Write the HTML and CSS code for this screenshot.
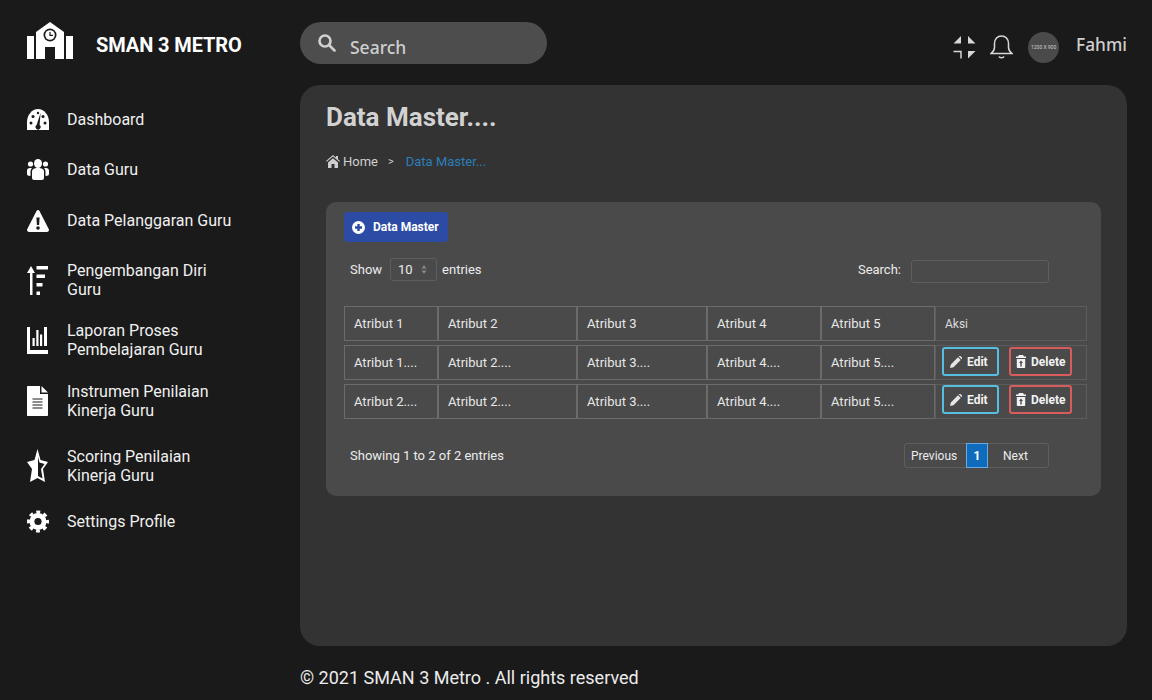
FILE: index.html
```html
<!DOCTYPE html>
<html>
<head>
  <title>SMAN 3 Metro - Data Master</title>
  <link rel="stylesheet" href="styles.css">
</head>
<body>
  <div class="page">
    <aside class="sidebar">
      <div class="brand">
        <svg class="brand-logo" viewBox="0 0 46 37">
          <path fill="#fff" d="M0 14h7v23H0zM39 14h7v23h-7zM9 10 L23 0 L37 10 V37 H28 V25 H18 V37 H9z"/>
          <circle cx="23" cy="13" r="6.500" fill="#1a1a1a"/>
          <circle cx="23" cy="13" r="4.800" fill="#fff"/>
          <path d="M23 10v3.300h3" fill="none" stroke="#1a1a1a" stroke-width="1.200"/>
        </svg>
        <span class="brand-name">SMAN 3 METRO</span>
      </div>
      <nav class="nav">
        <a class="nav-item">
          <span class="nav-icon">
            <svg width="22" height="21" viewBox="0 0 22 21">
              <path fill="#fff" d="M0 21V13C0 6 5 0 11 0s11 6 11 13v8z"/>
              <g fill="#1a1a1a"><circle cx="4" cy="14" r="1.500"/><circle cx="6" cy="7.500" r="1.500"/><circle cx="16" cy="7.500" r="1.500"/><circle cx="18" cy="14" r="1.500"/><circle cx="11" cy="4" r="1.200"/><path d="M13.600 4 L12.600 16 A2.500 2.500 0 1 1 9.600 16z"/></g>
            </svg>
          </span>
          <span>Dashboard</span>
        </a>
        <a class="nav-item nav-item-loose">
          <span class="nav-icon">
            <svg width="22" height="21" viewBox="0 0 22 21" fill="#fff">
              <ellipse cx="11" cy="4.500" rx="4" ry="4.500"/><circle cx="3.500" cy="5" r="2.600"/><circle cx="18.500" cy="5" r="2.600"/>
              <path d="M5 13c0-3 2-4 6-4s6 1 6 4v6c0 1-1 2-2 2H7c-1 0-2-1-2-2z"/>
              <path d="M0 15v-3c0-2 1-3 3-3h2c-1 1-1.500 2-1.500 4v4C1 17 0 16 0 15zM22 15v-3c0-2-1-3-3-3h-2c1 1 1.500 2 1.500 4v4c2.500 0 3.500-1 3.500-2z"/>
            </svg>
          </span>
          <span>Data Guru</span>
        </a>
        <a class="nav-item">
          <span class="nav-icon">
            <svg width="22" height="22" viewBox="0 0 22 22">
              <path fill="#fff" d="M9.500 1c.8-1.300 2.200-1.300 3 0l9.200 18c.7 1.400-.1 3-1.700 3H2c-1.600 0-2.400-1.600-1.700-3z"/>
              <path fill="#1a1a1a" d="M9.400 7.500h3.200l-.5 7.500H9.900z"/><circle cx="11" cy="18" r="1.800" fill="#1a1a1a"/>
            </svg>
          </span>
          <span>Data Pelanggaran Guru</span>
        </a>
        <a class="nav-item nav-item-tight">
          <span class="nav-icon">
            <svg width="21" height="29" viewBox="0 0 21 29" fill="#fff">
              <path d="M3 29V7H0L4 0l4 7H5.500v22z"/><path d="M9.500 0H21v3.500H9.500zM9.500 8.500H18V12H9.500zM9.500 17H15.500v3.500H9.500zM9.500 25.500H13V29H9.500z"/>
            </svg>
          </span>
          <span>Pengembangan Diri<br>Guru</span>
        </a>
        <a class="nav-item nav-item-snug">
          <span class="nav-icon">
            <svg width="21" height="27" viewBox="0 0 21 27" fill="#fff">
              <path d="M0 0h3v23h18v4H0z"/><path d="M5.500 11h2.200v8H5.500zM9.300 3h2.200v16H9.300zM13 7.500h2.200V19H13zM17 0h3v19h-3z"/>
            </svg>
          </span>
          <span>Laporan Proses<br>Pembelajaran Guru</span>
        </a>
        <a class="nav-item nav-item-wide">
          <span class="nav-icon">
            <svg width="21" height="30" viewBox="0 0 21 30">
              <path fill="#fff" d="M0 1c0-.6.400-1 1-1h12v8h8v21c0 .6-.4 1-1 1H1c-.6 0-1-.4-1-1zM14.500 0l6.500 6.500h-6.500z"/>
              <path stroke="#1a1a1a" stroke-width="1.200" d="M5.500 13h10M5.500 16h10M5.500 19h10M5.500 22h10"/>
            </svg>
          </span>
          <span>Instrumen Penilaian<br>Kinerja Guru</span>
        </a>
        <a class="nav-item nav-item-wide">
          <span class="nav-icon">
            <svg width="21" height="34" viewBox="0 0 21 34">
              <path fill="#fff" d="M10.500 0l3 11 7.500 2-5 7 2 13-7.500-4-7.500 4 2-13-5-7 7.500-2z"/>
              <path fill="#1a1a1a" d="M11 8l1.500 5.500 5 1.500-3.500 5 1.500 9.500-4.500-2.500z"/>
            </svg>
          </span>
          <span>Scoring Penilaian<br>Kinerja Guru</span>
        </a>
        <a class="nav-item">
          <span class="nav-icon">
            <svg width="22" height="23" viewBox="0 0 22 23">
              <circle cx="11" cy="11.500" r="8.500" fill="#fff"/>
              <circle cx="11" cy="11.500" r="9.500" fill="none" stroke="#fff" stroke-width="3" stroke-dasharray="3.900 3.560" stroke-dashoffset="2"/>
              <circle cx="11" cy="11.500" r="3.600" fill="#1a1a1a"/>
            </svg>
          </span>
          <span>Settings Profile</span>
        </a>
      </nav>
    </aside>

    <div class="main">
      <header class="topbar">
        <div class="search-pill">
          <svg width="18" height="18" viewBox="0 0 18 18" fill="none" stroke="#d0d0d0" stroke-width="2.600">
            <circle cx="7" cy="7" r="5.500"/><path d="M11 11l5.500 5.500" stroke-linecap="round"/>
          </svg>
          <span class="search-text">Search</span>
        </div>
        <div class="topbar-right">
          <svg width="23" height="23" viewBox="0 0 23 23" fill="#d8d8d8">
            <path d="M8 0v7.500H.5zM15 0l7.500 7.500H15zM15 22.500V15h7.500z"/>
            <path d="M.5 15.500H8v7" fill="none" stroke="#d8d8d8" stroke-width="1.500"/>
          </svg>
          <svg class="bell" width="23" height="24" viewBox="0 0 23 24" fill="none" stroke="#d8d8d8" stroke-width="1.500">
            <path d="M1 18.500c2-1.500 3.500-3 3.500-6V8.500C4.500 4 7.500 1 11.500 1s7 3 7 7.500v4c0 3 1.500 4.500 3.500 6z"/>
            <path d="M9 21.500c.5 1.500 4.500 1.500 5 0"/>
          </svg>
          <div class="avatar">1200 X 900</div>
          <span class="user-name">Fahmi</span>
        </div>
      </header>

      <section class="content-card">
        <h1 class="page-title">Data Master....</h1>
        <div class="breadcrumb">
          <svg width="14" height="13" viewBox="0 0 14 13" fill="#cfcfcf">
            <path d="M7 0l3 2.600V1h2v3.300L14 6l-.7.800L7 1.500.7 6.800 0 6zM2 7.500l5-4.200 5 4.200V13H8.500V9h-3v4H2z"/>
          </svg>
          <span class="crumb-home">Home</span>
          <span class="crumb-sep">&gt;</span>
          <span class="crumb-active">Data Master...</span>
        </div>

        <div class="panel">
          <button class="btn-add" type="button">
            <svg width="13" height="13" viewBox="0 0 13 13">
              <circle cx="6.500" cy="6.500" r="6.500" fill="#fff"/>
              <path d="M6.500 3v7M3 6.500h7" stroke="#2c4ba5" stroke-width="2.400"/>
            </svg>
            Data Master
          </button>

          <div class="table-tools">
            <div class="tool-left">
              Show
              <div class="select-box">10
                <svg width="6" height="9" viewBox="0 0 6 9" fill="#858585"><path d="M3 0l2.500 3.500h-5zM3 9L.5 5.500h5z"/></svg>
              </div>
              entries
            </div>
            <div class="tool-right">
              Search:
              <div class="search-box"></div>
            </div>
          </div>

          <table class="data-table">
            <colgroup>
              <col class="col-1"><col class="col-2"><col class="col-3"><col class="col-4"><col class="col-5"><col class="col-6">
            </colgroup>
            <tr class="head-row">
              <td>Atribut 1</td><td>Atribut 2</td><td>Atribut 3</td><td>Atribut 4</td><td>Atribut 5</td>
              <td class="action-head">Aksi</td>
            </tr>
            <tr>
              <td>Atribut 1....</td><td>Atribut 2....</td><td>Atribut 3....</td><td>Atribut 4....</td><td>Atribut 5....</td>
              <td class="action-cell">
                <div class="actions">
                  <button class="btn-outline btn-edit" type="button">
                    <svg width="12" height="12" viewBox="0 0 12 12" fill="#e6e6e6"><path d="M0 12l.8-3.500L8 1.300 10.700 4 3.500 11.200zM8.800.5l.5-.5c.4-.3.800-.3 1.100 0l1.600 1.600c.3.300.3.700 0 1l-.5.600z"/></svg>
                    Edit
                  </button>
                  <button class="btn-outline btn-delete" type="button">
                    <svg width="10" height="13" viewBox="0 0 10 13" fill="#f2f2f2"><path d="M3 0h4l1 1.500h2V3H0V1.500h2zM.8 4h8.400v8c0 .6-.4 1-1 1H1.800c-.6 0-1-.4-1-1zM5 5.500L3 8h1.300v3.500h1.400V8H7z"/></svg>
                    Delete
                  </button>
                </div>
              </td>
            </tr>
            <tr>
              <td>Atribut 2....</td><td>Atribut 2....</td><td>Atribut 3....</td><td>Atribut 4....</td><td>Atribut 5....</td>
              <td class="action-cell action-cell-last">
                <div class="actions">
                  <button class="btn-outline btn-edit" type="button">
                    <svg width="12" height="12" viewBox="0 0 12 12" fill="#e6e6e6"><path d="M0 12l.8-3.500L8 1.300 10.700 4 3.500 11.200zM8.800.5l.5-.5c.4-.3.800-.3 1.100 0l1.600 1.600c.3.300.3.700 0 1l-.5.600z"/></svg>
                    Edit
                  </button>
                  <button class="btn-outline btn-delete" type="button">
                    <svg width="10" height="13" viewBox="0 0 10 13" fill="#f2f2f2"><path d="M3 0h4l1 1.500h2V3H0V1.500h2zM.8 4h8.400v8c0 .6-.4 1-1 1H1.800c-.6 0-1-.4-1-1zM5 5.500L3 8h1.300v3.500h1.400V8H7z"/></svg>
                    Delete
                  </button>
                </div>
              </td>
            </tr>
          </table>

          <div class="table-footer">
            <span>Showing 1 to 2 of 2 entries</span>
            <div class="pagination">
              <span class="page-prev">Previous</span>
              <span class="page-num">1</span>
              <span class="page-next">Next</span>
            </div>
          </div>
        </div>
      </section>

      <footer class="footer">© 2021 SMAN 3 Metro . All rights reserved</footer>
    </div>
  </div>
</body>
</html>
```

FILE: styles.css
```css
body {
  margin: 0;
  background-color: #1a1a1a;
  font-family: Roboto, "Liberation Sans", sans-serif;
  color: #f0f0f0;
}

.page {
  display: flex;
  height: 700px;
  overflow: hidden;
}

.sidebar {
  width: 300px;
  flex-shrink: 0;
  padding: 22px 0 0 27px;
  box-sizing: border-box;
}

.brand {
  display: flex;
  align-items: center;
  gap: 23px;
  height: 37px;
  margin-bottom: 51px;
}

.brand-logo {
  width: 46px;
  height: 37px;
}

.brand-name {
  font-size: 20px;
  font-weight: 700;
  color: #fff;
  margin-top: 8px;
  letter-spacing: -0.1px;
}

.nav {
  display: flex;
  flex-direction: column;
}

.nav-item {
  display: flex;
  align-items: center;
  font-size: 16px;
  line-height: 19px;
  margin-bottom: 31px;
  color: #f0f0f0;
}

.nav-item-loose {
  margin-bottom: 32px;
}

.nav-item-tight {
  margin-bottom: 22px;
}

.nav-item-snug {
  margin-bottom: 23px;
}

.nav-item-wide {
  margin-bottom: 27px;
}

.nav-icon {
  display: flex;
  align-items: center;
  width: 40px;
  height: 19px;
  flex-shrink: 0;
}

.main {
  flex: 1;
  padding-right: 25px;
  display: flex;
  flex-direction: column;
}

.topbar {
  display: flex;
  justify-content: space-between;
  align-items: flex-start;
  height: 85px;
  padding-top: 22px;
  box-sizing: border-box;
}

.search-pill {
  display: flex;
  align-items: center;
  gap: 14px;
  width: 247px;
  height: 42px;
  padding-left: 18px;
  box-sizing: border-box;
  border-radius: 21px;
  background-color: #4d4d4d;
}

.search-text {
  font-family: "Noto Sans", sans-serif;
  font-size: 17.5px;
  font-weight: 500;
  color: #cfcfcf;
  margin-top: 7px;
}

.topbar-right {
  display: flex;
  align-items: center;
  height: 42px;
  margin-top: 4px;
}

.bell {
  margin-left: 14px;
}

.avatar {
  width: 31px;
  height: 31px;
  margin-left: 15px;
  border-radius: 50%;
  background-color: #4a4a4a;
  color: #cfcfcf;
  font-size: 5px;
  line-height: 31px;
  text-align: center;
  white-space: nowrap;
}

.user-name {
  margin: -5px 0 0 17px;
  font-family: "Noto Sans", sans-serif;
  font-size: 17.3px;
  font-weight: 500;
  color: #cfcfcf;
}

.content-card {
  height: 561px;
  box-sizing: border-box;
  padding: 16px 26px 0;
  border-radius: 20px;
  background-color: #333333;
}

.page-title {
  margin: 0;
  font-size: 26px;
  line-height: 32px;
  font-weight: 700;
  color: #d2d2d2;
}

.breadcrumb {
  display: flex;
  align-items: center;
  height: 16px;
  margin-top: 20px;
  font-size: 13px;
}

.crumb-home {
  margin-left: 3px;
  color: #cfcfcf;
}

.crumb-sep {
  margin: 0 10px;
  font-size: 11px;
  color: #cfcfcf;
}

.crumb-active {
  margin-left: 2px;
  color: #2b7fba;
}

.panel {
  margin-top: 33px;
  height: 294px;
  box-sizing: border-box;
  padding: 10px 14px 0 18px;
  border-radius: 10px;
  background-color: #4a4a4a;
  font-size: 13px;
}

.btn-add {
  display: flex;
  align-items: center;
  gap: 8px;
  width: 104px;
  height: 30px;
  padding: 0 0 0 8px;
  border: none;
  border-radius: 4px;
  background-color: #2c4ba5;
  color: #fff;
  font-family: Roboto, sans-serif;
  font-size: 12px;
  font-weight: 700;
}

.table-tools {
  display: flex;
  justify-content: space-between;
  align-items: center;
  height: 25px;
  margin-top: 15px;
  padding: 0 38px 0 6px;
  color: #ececec;
}

.tool-left,
.tool-right {
  display: flex;
  align-items: center;
}

.select-box {
  display: flex;
  align-items: center;
  justify-content: space-between;
  width: 47px;
  height: 23px;
  box-sizing: border-box;
  margin: 0 5px 0 8px;
  padding: 0 9px 0 7px;
  border: 1px solid #5e5e5e;
  border-radius: 3px;
}

.search-box {
  width: 138px;
  height: 23px;
  box-sizing: border-box;
  margin: 3px 0 0 10px;
  border: 1px solid #5e5e5e;
  border-radius: 3px;
}

.data-table {
  border-collapse: separate;
  border-spacing: 0 4px;
  table-layout: fixed;
  width: 743px;
  margin-top: 20px;
  color: #e8e8e8;
}

.col-1 { width: 94px; }
.col-2 { width: 139px; }
.col-3 { width: 130px; }
.col-4 { width: 114px; }
.col-5 { width: 114px; }
.col-6 { width: 152px; }

.data-table td {
  height: 33px;
  padding: 0 0 0 9px;
  border: 1px solid #6b6b6b;
}

.data-table .action-head {
  border-color: #5c5c5c;
  font-size: 12px;
  color: #dcdcdc;
}

.data-table .action-cell {
  height: 32px;
  padding: 1px 0 0;
  border-color: #5c5c5c;
  vertical-align: top;
}

.data-table .action-cell-last {
  height: 33px;
  padding-top: 0;
}

.actions {
  display: flex;
  gap: 10px;
  padding-left: 6px;
}

.btn-outline {
  display: flex;
  align-items: center;
  gap: 5px;
  height: 29px;
  background: none;
  border-radius: 3px;
  border-width: 2px;
  border-style: solid;
  color: #f2f2f2;
  font-family: Roboto, sans-serif;
  font-size: 12px;
  font-weight: 700;
}

.btn-edit {
  width: 57px;
  padding: 0 0 0 6px;
  border-color: #56bfe0;
}

.btn-delete {
  width: 63px;
  padding: 0 0 0 5px;
  border-color: #d95c5c;
}

.table-footer {
  display: flex;
  justify-content: space-between;
  align-items: center;
  height: 25px;
  margin-top: 20px;
  padding: 0 38px 0 6px;
  color: #ececec;
}

.pagination {
  display: flex;
  width: 145px;
  height: 25px;
  box-sizing: border-box;
  border: 1px solid #5e5e5e;
  border-radius: 3px;
  font-size: 12px;
  line-height: 24px;
}

.page-prev {
  width: 61px;
  padding-left: 6px;
  box-sizing: border-box;
}

.page-num {
  width: 22px;
  margin: -1px 0;
  height: 25px;
  box-sizing: border-box;
  border: 1px solid #6ba8e0;
  background-color: #0f6cbd;
  color: #fff;
  font-weight: 700;
  text-align: center;
}

.page-next {
  flex: 1;
  padding-left: 15px;
}

.footer {
  margin-top: 21px;
  font-size: 18px;
  line-height: 22px;
  color: #ececec;
}
```
